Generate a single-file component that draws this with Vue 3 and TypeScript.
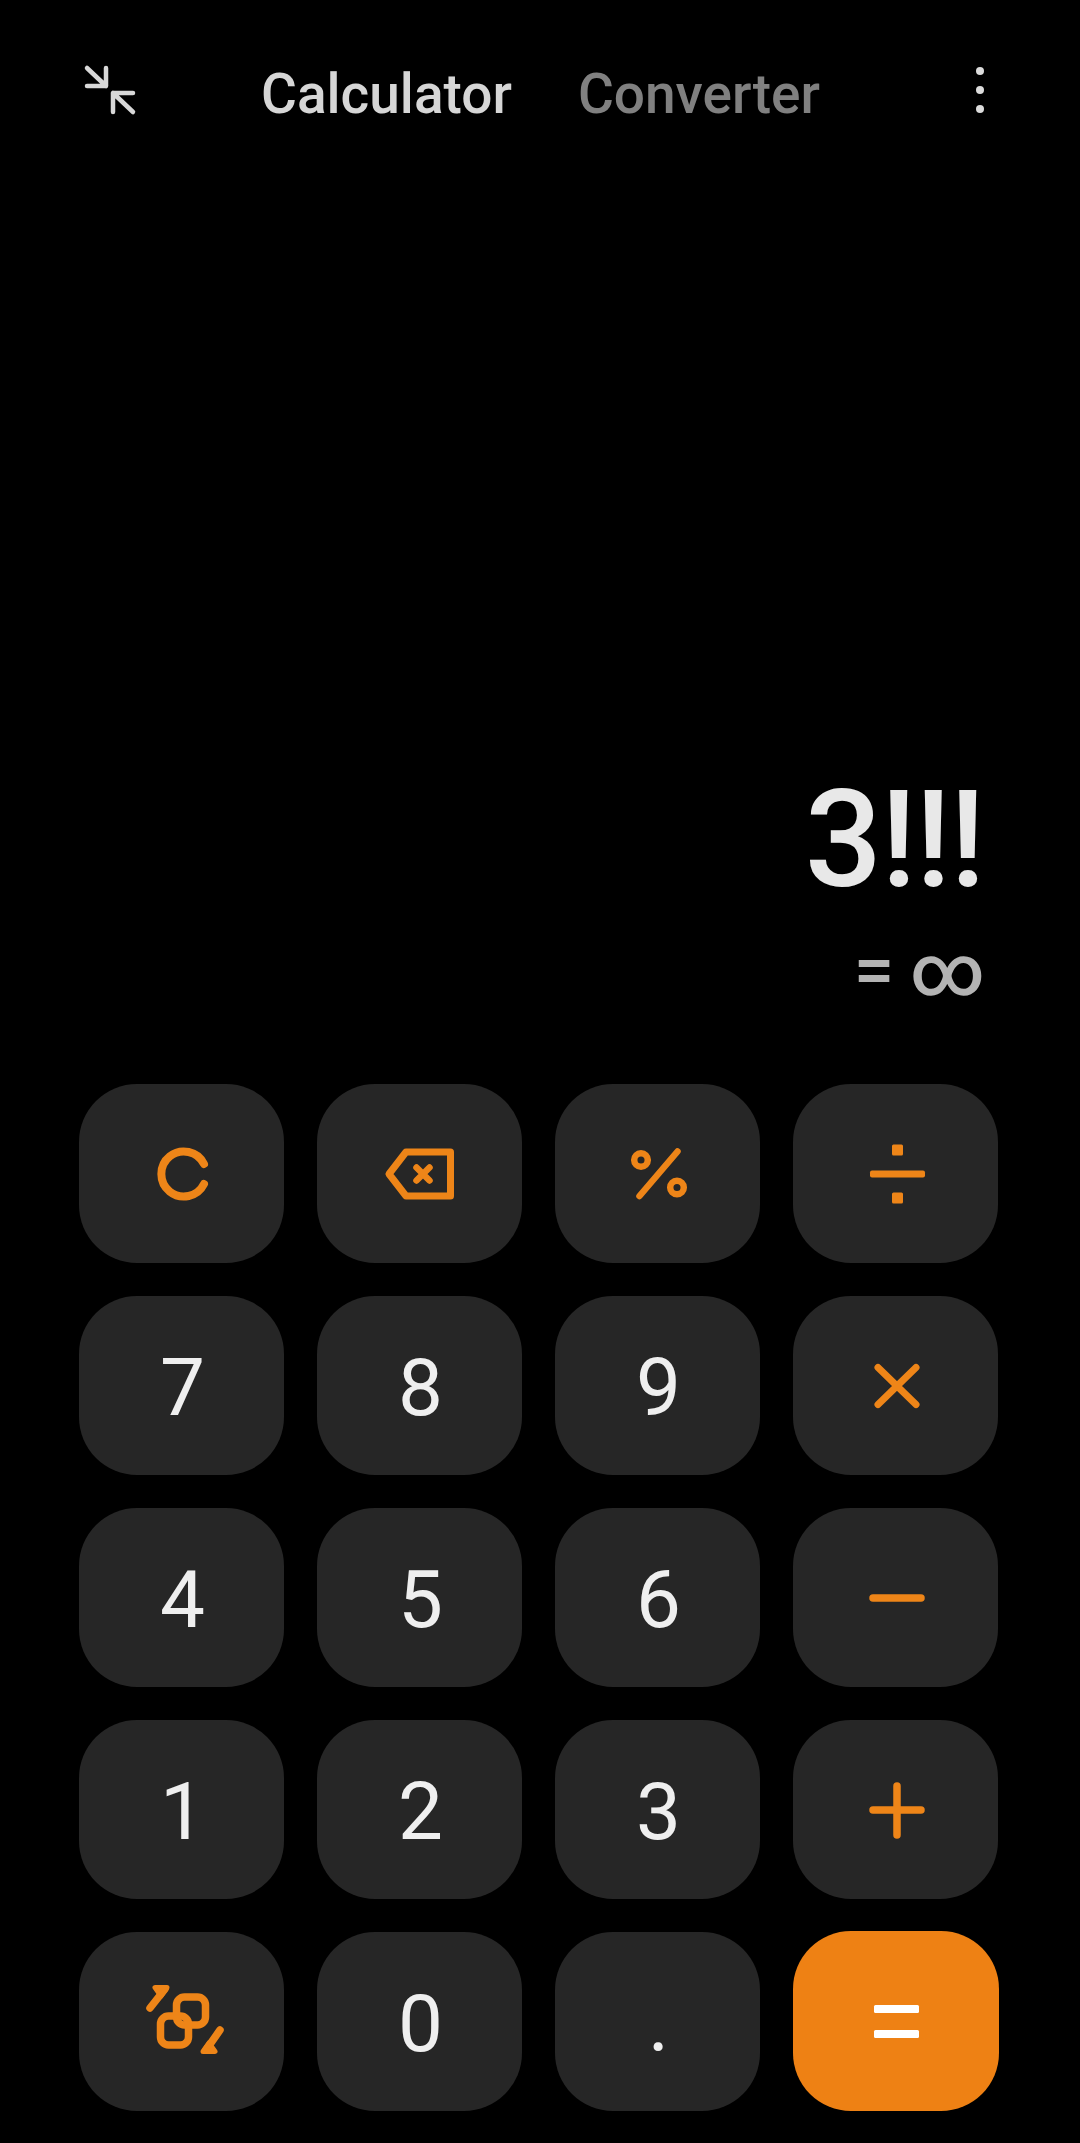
<script setup lang="ts">
interface Key {
  id: string;
  label?: string;
  equals?: boolean;
}

const keys: Key[] = [
  { id: 'clear' },
  { id: 'back' },
  { id: 'percent' },
  { id: 'divide' },
  { id: '7', label: '7' },
  { id: '8', label: '8' },
  { id: '9', label: '9' },
  { id: 'times' },
  { id: '4', label: '4' },
  { id: '5', label: '5' },
  { id: '6', label: '6' },
  { id: 'minus' },
  { id: '1', label: '1' },
  { id: '2', label: '2' },
  { id: '3', label: '3' },
  { id: 'plus' },
  { id: 'convert' },
  { id: '0', label: '0' },
  { id: 'dot', label: '.' },
  { id: 'equals', equals: true },
];
</script>

<template>
  <div class="calc">
    <header class="topbar">
      <svg class="shrink" viewBox="0 0 60 60" fill="none" stroke="#d8d8d8" stroke-width="4.500" stroke-linecap="round" stroke-linejoin="round">
        <path d="M4 5L23 23M23 5V23H4" />
        <path d="M50 49L30 30M30 49V30H50" />
      </svg>
      <nav class="tabs">
        <span class="tab active">Calculator</span>
        <span class="tab">Converter</span>
      </nav>
      <div class="more">
        <i></i>
        <i></i>
        <i></i>
      </div>
    </header>

    <section class="display">
      <div class="expression">3!!!</div>
      <div class="result">= ∞</div>
    </section>

    <main class="keypad">
      <button v-for="key in keys" :key="key.id" class="key" :class="{ equals: key.equals, digit: key.label }">
        <template v-if="key.label">{{ key.label }}</template>
        <svg v-else class="icon" viewBox="-50 -50 100 100" fill="none" stroke="#ee8518" stroke-width="7" stroke-linecap="round" stroke-linejoin="round">
          <path v-if="key.id === 'clear'" d="M22 -10A22.5 22.5 0 1 0 22 10" stroke-width="8" />
          <template v-else-if="key.id === 'back'">
            <path d="M-31 0L-14 -22H30.500V22H-14Z" stroke-width="7" />
            <path d="M-3.500 -6.500L9.500 6.500M9.500 -6.500L-3.500 6.500" stroke-width="6.500" />
          </template>
          <template v-else-if="key.id === 'percent'">
            <circle cx="-17" cy="-14" r="6.800" stroke-width="6.500" />
            <circle cx="19" cy="13.500" r="6.800" stroke-width="6.500" />
            <path d="M19.500 -22.500L-18.500 22" stroke-width="6.500" />
          </template>
          <template v-else-if="key.id === 'divide'">
            <rect x="-26" y="-3.500" width="55" height="7" rx="2" fill="#ee8518" stroke="none" />
            <rect x="-4" y="-29.500" width="11" height="11" rx="1.500" fill="#ee8518" stroke="none" />
            <rect x="-4" y="18.500" width="11" height="11" rx="1.500" fill="#ee8518" stroke="none" />
          </template>
          <path v-else-if="key.id === 'times'" d="M-18 -18.500L20 18.500M20 -18.500L-18 18.500" />
          <path v-else-if="key.id === 'minus'" d="M-23 0H25" stroke-width="7.500" />
          <path v-else-if="key.id === 'plus'" d="M-23 0H25M1 -24V25" stroke-width="7.500" />
          <template v-else-if="key.id === 'convert'">
            <rect x="-5.500" y="-25" width="29" height="28" rx="8" stroke-width="7.500" />
            <rect x="-21.500" y="-6" width="28" height="29" rx="8" stroke-width="7.500" />
            <path d="M-32 -14L-17 -33" stroke-width="7.500" />
            <path d="M-27 -34.500H-15L-21 -26Z" fill="#ee8518" stroke-width="5" />
            <path d="M38 8L24 28" stroke-width="7.500" />
            <path d="M33 29.500H21L27 21Z" fill="#ee8518" stroke-width="5" />
          </template>
          <template v-else-if="key.id === 'equals'">
            <rect x="-22" y="-16" width="45" height="8" rx="1.500" fill="#fff" stroke="none" />
            <rect x="-22" y="9" width="45" height="8" rx="1.500" fill="#fff" stroke="none" />
          </template>
        </svg>
      </button>
    </main>
  </div>
</template>

<style>
html,
body {
  margin: 0;
  background: #000;
}
</style>

<style scoped>
.calc {
  width: 1080px;
  height: 2143px;
  display: flex;
  flex-direction: column;
  background: #000;
  font-family: Roboto, "Liberation Sans", sans-serif;
  overflow: hidden;
}

.topbar {
  height: 186px;
  display: flex;
  align-items: center;
  padding-left: 83px;
  padding-right: 96px;
  box-sizing: border-box;
}

.shrink {
  width: 60px;
  height: 60px;
  flex: none;
}

.tabs {
  display: flex;
  gap: 66px;
  margin-left: 118px;
  flex: 1;
  padding-top: 2px;
}

.tab {
  font-size: 55px;
  line-height: 60px;
  font-weight: 500;
  color: #808080;
}

.tab.active {
  color: #d6d6d6;
}

.more {
  display: flex;
  flex-direction: column;
  gap: 11px;
  margin-top: -6px;
}

.more i {
  display: block;
  width: 8px;
  height: 8px;
  border-radius: 50%;
  background: #dcdcdc;
}

.display {
  flex: 1;
  display: flex;
  flex-direction: column;
  justify-content: flex-end;
  align-items: flex-end;
  padding-right: 96px;
  padding-bottom: 71px;
}

.expression {
  font-size: 136px;
  line-height: 150px;
  font-weight: 500;
  letter-spacing: -1.500px;
  color: #e8e8e8;
}

.result {
  margin-top: 14px;
  margin-right: -1px;
  font-size: 72px;
  line-height: 84px;
  font-weight: 500;
  word-spacing: -2px;
  color: #b3b3b3;
}

.keypad {
  display: grid;
  grid-template-columns: repeat(4, 205px);
  grid-auto-rows: 179px;
  gap: 33px;
  padding: 0 0 32px 79px;
}

.key {
  display: flex;
  align-items: center;
  justify-content: center;
  padding: 0;
  border: none;
  border-radius: 58px;
  background: #262626;
  color: #efefef;
  font-family: inherit;
  font-size: 80px;
  font-weight: 400;
}

.key.digit {
  padding: 5px 0 0 2px;
}

.key.equals {
  background: #ee8114;
  margin: -1px -1px 0 0;
}

.icon {
  width: 100px;
  height: 100px;
}
</style>
